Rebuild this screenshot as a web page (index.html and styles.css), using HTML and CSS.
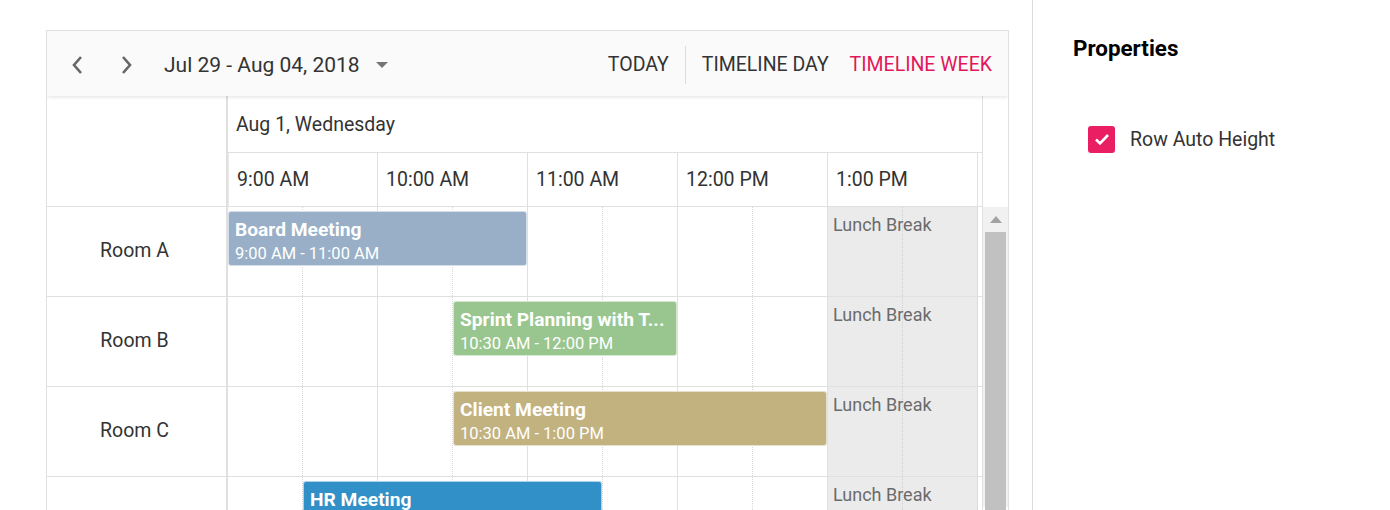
FILE: index.html
```html
<!DOCTYPE html>
<html>
<head>
<meta charset="utf-8">
<link rel="stylesheet" href="styles.css">
</head>
<body>
<div class="page">
  <div class="main">
    <div class="scheduler">
      <div class="toolbar">
        <button class="nav-btn" aria-label="Previous">
          <svg width="14" height="22" viewBox="0 0 14 22"><path d="M11 3 L4 11 L11 19" fill="none" stroke="#666" stroke-width="2.6"/></svg>
        </button>
        <button class="nav-btn" aria-label="Next">
          <svg width="14" height="22" viewBox="0 0 14 22"><path d="M3 3 L10 11 L3 19" fill="none" stroke="#666" stroke-width="2.6"/></svg>
        </button>
        <div class="date-range">Jul 29 - Aug 04, 2018
          <svg class="caret" width="14" height="8" viewBox="0 0 14 8"><path d="M1 1 L13 1 L7 7 Z" fill="#757575"/></svg>
        </div>
        <div class="views">
          <span class="view">TODAY</span>
          <span class="sep"></span>
          <span class="view">TIMELINE DAY</span>
          <span class="view active">TIMELINE WEEK</span>
        </div>
      </div>
      <div class="sched-body">
        <div class="res-col">
          <div class="res-header"></div>
          <div class="res-cell">Room A</div>
          <div class="res-cell">Room B</div>
          <div class="res-cell">Room C</div>
          <div class="res-cell"></div>
        </div>
        <div class="content-col">
          <div class="date-row"><div class="date-cell">Aug 1, Wednesday</div></div>
          <div class="time-row">
            <div class="time-cell">9:00 AM</div>
            <div class="time-cell">10:00 AM</div>
            <div class="time-cell">11:00 AM</div>
            <div class="time-cell">12:00 PM</div>
            <div class="time-cell">1:00 PM</div>
            <div class="time-cell"></div>
          </div>
          <div class="work-row">
            <div class="slot minor"></div><div class="slot major"></div>
            <div class="slot minor"></div><div class="slot major"></div>
            <div class="slot minor"></div><div class="slot major"></div>
            <div class="slot minor"></div><div class="slot major"></div>
            <div class="slot minor lunch"><span class="lunch-text">Lunch Break</span></div><div class="slot major lunch"></div>
            <div class="slot minor"></div>
            <div class="event ev-a" style="left:0px;width:299px"><div class="ev-title">Board Meeting</div><div class="ev-time">9:00 AM - 11:00 AM</div></div>
          </div>
          <div class="work-row">
            <div class="slot minor"></div><div class="slot major"></div>
            <div class="slot minor"></div><div class="slot major"></div>
            <div class="slot minor"></div><div class="slot major"></div>
            <div class="slot minor"></div><div class="slot major"></div>
            <div class="slot minor lunch"><span class="lunch-text">Lunch Break</span></div><div class="slot major lunch"></div>
            <div class="slot minor"></div>
            <div class="event ev-b" style="left:225px;width:224px"><div class="ev-title">Sprint Planning with T...</div><div class="ev-time">10:30 AM - 12:00 PM</div></div>
          </div>
          <div class="work-row">
            <div class="slot minor"></div><div class="slot major"></div>
            <div class="slot minor"></div><div class="slot major"></div>
            <div class="slot minor"></div><div class="slot major"></div>
            <div class="slot minor"></div><div class="slot major"></div>
            <div class="slot minor lunch"><span class="lunch-text">Lunch Break</span></div><div class="slot major lunch"></div>
            <div class="slot minor"></div>
            <div class="event ev-c" style="left:225px;width:374px"><div class="ev-title">Client Meeting</div><div class="ev-time">10:30 AM - 1:00 PM</div></div>
          </div>
          <div class="work-row">
            <div class="slot minor"></div><div class="slot major"></div>
            <div class="slot minor"></div><div class="slot major"></div>
            <div class="slot minor"></div><div class="slot major"></div>
            <div class="slot minor"></div><div class="slot major"></div>
            <div class="slot minor lunch"><span class="lunch-text">Lunch Break</span></div><div class="slot major lunch"></div>
            <div class="slot minor"></div>
            <div class="event ev-d" style="left:75px;width:299px"><div class="ev-title">HR Meeting</div></div>
          </div>
        </div>
        <div class="scroll-col">
          <div class="scroll-head"></div>
          <div class="scroll-track">
            <div class="scroll-arrow"><svg width="12" height="7" viewBox="0 0 12 7"><path d="M0 7 L6 0 L12 7 Z" fill="#a3a3a3"/></svg></div>
            <div class="scroll-thumb"></div>
          </div>
        </div>
      </div>
    </div>
  </div>
  <div class="panel">
    <div class="panel-title">Properties</div>
    <label class="check-row">
      <span class="checkbox"><svg width="16" height="13" viewBox="0 0 16 13"><path d="M2 6.5 L6 10.5 L14 2" fill="none" stroke="#fff" stroke-width="2.6"/></svg></span>
      <span class="check-label">Row Auto Height</span>
    </label>
  </div>
</div>
</body>
</html>
```

FILE: styles.css
```css
* { box-sizing: border-box; }
html, body {
  margin: 0;
  padding: 0;
  background: #fff;
  font-family: Roboto, "Noto Sans", "Liberation Sans", sans-serif;
  color: #333;
}
.page {
  display: flex;
  width: 1390px;
  height: 510px;
  overflow: hidden;
}
.main {
  width: 1033px;
  flex: none;
  border-right: 1px solid #dcdcdc;
  padding: 30px 0 0 46px;
}
.scheduler {
  width: 963px;
  border: 1px solid #e0e0e0;
  border-bottom: none;
  height: 480px;
  overflow: hidden;
}
.toolbar {
  height: 65px;
  background: #fafafa;
  display: flex;
  align-items: center;
  padding: 2px 16px 0 10px;
  box-shadow: 0 1px 4px rgba(0,0,0,0.12);
  position: relative;
  z-index: 2;
}
.nav-btn {
  width: 40px;
  height: 40px;
  border: none;
  background: transparent;
  display: flex;
  align-items: center;
  justify-content: center;
  padding: 0;
  margin-right: 10px;
}
.date-range {
  margin-left: 7px;
  font-size: 21px;
  color: #333;
  display: flex;
  align-items: center;
}
.caret { margin-left: 15px; }
.views {
  margin-left: auto;
  display: flex;
  align-items: center;
  font-size: 19.5px;
}
.view { color: #333; }
.view.active { color: #e3165b; margin-left: 21px; }
.sep {
  width: 1px;
  height: 38px;
  background: #dcdcdc;
  margin: 0 16px;
}
.sched-body {
  display: flex;
  background: #fff;
}
.res-col {
  width: 181px;
  flex: none;
  border-right: 2px solid #e0e0e0;
}
.res-header {
  height: 111px;
  border-bottom: 1px solid #e0e0e0;
}
.res-cell {
  height: 90px;
  border-bottom: 1px solid #e0e0e0;
  display: flex;
  align-items: center;
  justify-content: center;
  font-size: 19.5px;
  color: #333;
  padding-right: 4px;
  padding-bottom: 2px;
}
.content-col {
  width: 755px;
  flex: none;
  overflow: hidden;
  border-right: 1px solid #e0e0e0;
}
.date-row {
  height: 57px;
  border-bottom: 1px solid #e0e0e0;
  display: flex;
  align-items: center;
  padding-left: 8px;
  font-size: 19.5px;
}
.time-row {
  height: 54px;
  border-bottom: 1px solid #e0e0e0;
  display: flex;
}
.time-cell {
  width: 150px;
  flex: none;
  border-right: 1px solid #e0e0e0;
  font-size: 19.5px;
  display: flex;
  align-items: center;
  padding-left: 8px;
}
.time-cell:first-child { border-left: 1px solid #eaeaea; }
.work-row {
  height: 90px;
  border-bottom: 1px solid #e0e0e0;
  display: flex;
  position: relative;
}
.slot {
  width: 75px;
  flex: none;
  height: 100%;
}
.slot.minor { border-right: 1px dotted #d8d8d8; }
.slot.major { border-right: 1px solid #e0e0e0; }
.slot.lunch { background: #ebebeb; }
.slot.lunch.minor { border-right: 1px dotted #cfcfcf; position: relative; }
.slot.lunch.major { border-right: 1px solid #dadada; }
.lunch-text {
  position: absolute;
  left: 5px;
  top: 7px;
  white-space: nowrap;
  font-size: 18px;
  color: #6b6b6b;
}
.event {
  position: absolute;
  top: 4px;
  height: 55px;
  border-radius: 3px;
  border: 1px solid rgba(255,255,255,0.6);
  color: #fff;
  padding: 5px 0 0 6px;
  overflow: hidden;
  white-space: nowrap;
}
.ev-title {
  font-size: 19.2px;
  font-weight: 700;
  line-height: 26px;
}
.ev-time {
  font-size: 16.5px;
  line-height: 21px;
}
.ev-a { background: #98afc7; }
.ev-b { background: #99c68e; }
.ev-c { background: #c2b280; }
.ev-d { background: #3090c7; }
.scroll-col {
  width: 25px;
  flex: none;
}
.scroll-head { height: 111px; }
.scroll-track {
  background: #f1f1f1;
  height: 300px;
  padding: 0 2px;
}
.scroll-arrow {
  height: 25px;
  display: flex;
  align-items: center;
  justify-content: center;
}
.scroll-thumb {
  height: 280px;
  background: #c1c1c1;
}
.panel {
  flex: 1;
  padding: 34px 0 0 40px;
}
.panel-title {
  font-size: 22.4px;
  font-weight: 700;
  color: #000;
  line-height: 28px;
}
.check-row {
  display: flex;
  align-items: center;
  margin: 64px 0 0 15px;
}
.checkbox {
  width: 27px;
  height: 27px;
  border-radius: 3px;
  background: #e91e63;
  display: flex;
  align-items: center;
  justify-content: center;
}
.check-label {
  margin-left: 15px;
  font-size: 19.5px;
  color: #333;
}
```
